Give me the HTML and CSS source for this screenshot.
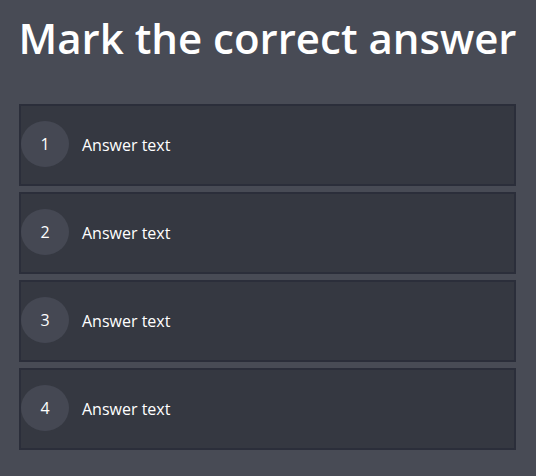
FILE: index.html
```html
<!DOCTYPE html>
<html>
<head>
<meta charset="utf-8">
<link rel="stylesheet" href="styles.css">
</head>
<body>
<div class="quiz">
  <h1 class="title">Mark the correct answer</h1>
  <div class="answers">
    <div class="answer"><span class="num">1</span><span class="label">Answer text</span></div>
    <div class="answer"><span class="num">2</span><span class="label">Answer text</span></div>
    <div class="answer"><span class="num">3</span><span class="label">Answer text</span></div>
    <div class="answer"><span class="num">4</span><span class="label">Answer text</span></div>
  </div>
</div>
</body>
</html>
```
FILE: styles.css
```css
html, body {
  margin: 0;
  padding: 0;
  background: #484b55;
  height: 100%;
}
body {
  font-family: "Open Sans", sans-serif;
  color: #ffffff;
}
.quiz {
  padding: 0 20px 0 19px;
}
.title {
  margin: 0;
  padding-top: 10px;
  height: 104px;
  box-sizing: border-box;
  display: flex;
  justify-content: center;
  font-size: 42px;
  font-weight: 600;
  line-height: 56px;
  white-space: nowrap;
}
.answers {
  display: flex;
  flex-direction: column;
  gap: 6px;
}
.answer {
  display: flex;
  align-items: center;
  height: 82px;
  box-sizing: border-box;
  background: #353841;
  border: 2px solid #2b2e3a;
}
.num {
  width: 48px;
  height: 46px;
  border-radius: 50%;
  background: #454853;
  display: flex;
  align-items: center;
  justify-content: center;
  font-size: 16px;
  margin-top: -2px;
}
.label {
  margin-left: 13px;
  font-size: 16px;
}
```
